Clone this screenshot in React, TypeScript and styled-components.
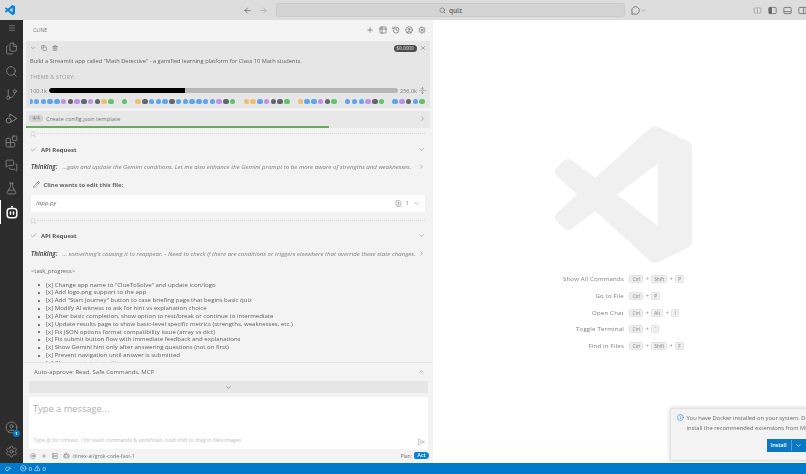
import React from 'react'
import styled, { createGlobalStyle } from 'styled-components'
import {
  ArrowLeft,
  ArrowRight,
  AtSign,
  Blocks,
  Bookmark,
  Bot,
  Check,
  ChevronDown,
  ChevronRight,
  ChevronUp,
  CircleUser,
  Copy,
  FileDiff,
  Files,
  FlaskConical,
  GitBranch,
  History,
  Info,
  Menu,
  MessageCircle,
  MessagesSquare,
  Pencil,
  Plus,
  Search,
  SendHorizontal,
  Server,
  Settings,
  SquareSplitHorizontal,
  Table2,
  Trash2,
  TriangleAlert,
  UnfoldVertical,
  X,
  XCircle,
} from 'lucide-react'

const GlobalStyle = createGlobalStyle`
  html, body {
    margin: 0;
    padding: 0;
    width: 806px;
    height: 474px;
    overflow: hidden;
    background: #fff;
  }
  * {
    box-sizing: border-box;
  }
`

const LOGO =
  'M23.15 2.587L18.21.21a1.494 1.494 0 0 0-1.705.29l-9.46 8.63-4.12-3.128a.999.999 0 0 0-1.276.057L.327 7.261A1 1 0 0 0 .326 8.74L3.899 12 .326 15.26a1 1 0 0 0 .001 1.479L1.65 17.94a.999.999 0 0 0 1.276.057l4.12-3.128 9.46 8.63a1.492 1.492 0 0 0 1.704.29l4.942-2.377A1.5 1.5 0 0 0 24 20.06V3.939a1.5 1.5 0 0 0-.85-1.352zm-5.146 14.861L10.826 12l7.178-5.448v10.896z'

const Page = styled.div`
  width: 806px;
  height: 474px;
  display: flex;
  flex-direction: column;
  overflow: hidden;
  font-family: 'Open Sans', 'Liberation Sans', sans-serif;
  filter: blur(0.3px);
`

const TitleBar = styled.div`
  height: 20px;
  flex: none;
  background: #dddddd;
  display: flex;
  align-items: center;
  color: #666;
`

const TitleLogo = styled.svg`
  width: 10px;
  height: 10px;
  margin-left: 5px;
  fill: #0a84d8;
`

const NavArrows = styled.div`
  margin-left: 228px;
  width: 33px;
  display: flex;
  gap: 7px;
`

const SearchBox = styled.div`
  width: 349px;
  height: 14px;
  background: #d4d4d4;
  border: 1px solid #cacaca;
  border-radius: 3px;
  display: flex;
  align-items: center;
  justify-content: center;
  gap: 3px;
  font-size: 6.5px;
  font-weight: 600;
  color: #666;
`

const CopilotGroup = styled.div`
  margin-left: 6px;
  display: flex;
  align-items: center;
  gap: 1px;
`

const LayoutGroup = styled.div`
  margin-left: auto;
  margin-right: -1px;
  display: flex;
  align-items: center;
  gap: 6px;
`

const Body = styled.div`
  flex: 1;
  min-height: 0;
  display: flex;
  position: relative;
`

const ActivityBar = styled.nav`
  width: 23px;
  flex: none;
  background: #2c2c2c;
  display: flex;
  flex-direction: column;
  align-items: center;
  color: #8b8b8b;
  padding-top: 2px;
`

const ActivityItem = styled.div<{ $active?: boolean }>`
  width: 100%;
  height: 23.4px;
  flex: none;
  display: flex;
  align-items: center;
  justify-content: center;
  position: relative;
  color: ${({ $active }) => ($active ? '#ffffff' : 'inherit')};
  border-left: 1px solid ${({ $active }) => ($active ? '#ffffff' : 'transparent')};
  padding-right: 1px;
`

const MenuItem = styled(ActivityItem)`
  height: 12px;
  margin-bottom: 2.5px;
`

const ActivitySpacer = styled.div`
  flex: 1;
`

const Badge = styled.span`
  position: absolute;
  right: 3px;
  bottom: 3px;
  width: 7px;
  height: 7px;
  border-radius: 50%;
  background: #007acc;
  color: #fff;
  font-size: 4px;
  font-weight: 700;
  line-height: 7px;
  text-align: center;
`

const SidePanel = styled.section`
  width: 410px;
  flex: none;
  background: #f3f3f3;
  display: flex;
  flex-direction: column;
  color: #616161;
`

const PanelHeader = styled.header`
  height: 20px;
  flex: none;
  display: flex;
  align-items: center;
  justify-content: space-between;
  padding: 0 7px 0 10px;
  font-size: 5px;
  letter-spacing: 0.1px;
  color: #777;
`

const HeaderIcons = styled.div`
  display: flex;
  align-items: center;
  gap: 5px;
  color: #6a6a6a;
`

const TaskCard = styled.div`
  height: 67.5px;
  flex: none;
  margin: 0.5px 3px 0;
  background: #e6e6e6;
  border-radius: 2px 2px 0 0;
  padding: 3px 4px 0 4px;
  display: flex;
  flex-direction: column;
`

const TaskTop = styled.div`
  height: 9px;
  display: flex;
  align-items: center;
  gap: 5px;
  color: #666;
`

const TaskCost = styled.span`
  margin-left: auto;
  margin-right: -1.5px;
  height: 7px;
  width: 23px;
  border-radius: 4px;
  background: #4c4c4c;
  color: #e4e4e4;
  font-size: 4.8px;
  line-height: 7px;
  text-align: center;
`

const TaskText = styled.div`
  margin-top: 4px;
  font-size: 5.7px;
  line-height: 8px;
  white-space: nowrap;
  color: #5f5f5f;
`

const TaskLabel = styled.div`
  margin-top: 8px;
  font-size: 5.7px;
  line-height: 8px;
  color: #a0a0a0;
`

const TokenRow = styled.div`
  margin-top: 6.5px;
  height: 7px;
  display: flex;
  align-items: center;
  font-size: 5.5px;
  color: #777;
  gap: 2px;
`

const TokenTrack = styled.div`
  flex: 1;
  height: 5px;
  border-radius: 3px;
  background: #b6b6b6;
  overflow: hidden;
`

const TokenFill = styled.div`
  height: 100%;
  background: #000;
  border-radius: 3px 0 0 3px;
`

const DotRow = styled.div`
  margin-top: 4.5px;
  height: 6px;
  display: flex;
  gap: 1.27px;
  overflow: hidden;
  & > :first-child {
    margin-left: -3px;
  }
`

const Dot = styled.span<{ $color: string }>`
  width: 5.5px;
  height: 5px;
  flex: none;
  border-radius: 2.5px 2.5px 2px 2px;
  background: ${({ $color }) => $color};
`

const StepBar = styled.div`
  height: 16.5px;
  flex: none;
  margin: 3px 3px 0;
  background: #e8e8e8;
  position: relative;
  display: flex;
  align-items: center;
  padding: 0 4px 1px 3px;
  gap: 3px;
  font-size: 5.8px;
  color: #777;
`

const StepBadge = styled.span`
  width: 14px;
  height: 7px;
  border-radius: 3px;
  background: #d2d2d2;
  font-size: 4.8px;
  line-height: 7px;
  text-align: center;
`

const StepProgress = styled.div`
  position: absolute;
  left: 0;
  bottom: 0;
  height: 1.5px;
  width: 303px;
  background: #68a85f;
`

const ChevronEnd = styled.span`
  margin-left: auto;
  display: flex;
  color: #888;
`

const Chat = styled.div`
  flex: 1;
  min-height: 0;
  overflow: hidden;
`

const MarkerRow = styled.div`
  height: 12px;
  margin: 0 8px 0 7px;
  display: flex;
  align-items: center;
  color: #c0c0c0;
  gap: 1px;
`

const MarkerLine = styled.div`
  flex: 1;
  border-top: 1px dotted #d8d8d8;
`

const ApiRow = styled.div<{ $tight?: boolean }>`
  height: 14px;
  margin-top: ${({ $tight }) => ($tight ? '2px' : '3px')};
  padding: 0 8px 0 7px;
  display: flex;
  align-items: center;
  gap: 4px;
  font-size: 5.95px;
  font-weight: 700;
  color: #555;
`

const GreenCheck = styled.span`
  display: flex;
  color: #5b9a5b;
`

const ThinkingRow = styled.div<{ $loose?: boolean }>`
  height: 14px;
  margin-top: ${({ $loose }) => ($loose ? '4px' : '3px')};
  padding: 0 8px 0 8px;
  display: flex;
  align-items: center;
  font-size: 6.1px;
  font-style: italic;
  color: #808080;
  white-space: nowrap;
`

const ThinkingLabel = styled.b`
  color: #555;
  margin-right: 5px;
`

const EditTitle = styled.div`
  height: 14px;
  margin-top: 4px;
  padding: 0 8px 0 10px;
  display: flex;
  align-items: center;
  gap: 3.5px;
  font-size: 5.85px;
  font-weight: 700;
  color: #666;
`

const FileBox = styled.div`
  height: 17px;
  margin: 3px 8px 3px 8px;
  background: #fff;
  border-radius: 2px;
  display: flex;
  align-items: center;
  padding: 0 5px 0 5px;
  font-size: 6px;
  font-style: italic;
  color: #666;
`

const FileMeta = styled.span`
  margin-left: auto;
  display: flex;
  align-items: center;
  gap: 4px;
  font-style: normal;
  color: #888;
`

const TagLine = styled.div`
  height: 14px;
  margin-top: 3px;
  padding-left: 8px;
  display: flex;
  align-items: center;
  font-size: 5.8px;
  color: #666;
`

const TaskList = styled.ul`
  margin: 4px 0 0;
  padding: 0 0 0 15px;
  list-style: none;
  font-size: 6.05px;
  line-height: 7.85px;
  color: #5f5f5f;
  white-space: nowrap;
`

const TaskItem = styled.li`
  display: flex;
  align-items: center;
  &::before {
    content: '';
    width: 2px;
    height: 2px;
    margin-right: 6px;
    flex: none;
    border-radius: 50%;
    background: #555;
  }
`

const AutoApprove = styled.div`
  height: 19.5px;
  flex: none;
  border-top: 1px solid #e3e3e3;
  display: flex;
  align-items: center;
  padding: 0 8px 0 11px;
  font-size: 6px;
  color: #666;
`

const ExpandBar = styled.div`
  height: 12px;
  flex: none;
  margin: 0 5px 0 6px;
  background: #e6e6e6;
  display: flex;
  align-items: center;
  justify-content: center;
  color: #666;
`

const Composer = styled.div`
  height: 52.5px;
  flex: none;
  margin: 3.5px 5px 0 6px;
  background: #fff;
  position: relative;
  padding: 5px 0 0 4px;
`

const Placeholder = styled.div`
  font-size: 9.3px;
  line-height: 14px;
  color: #b0b0b0;
`

const Hint = styled.div`
  position: absolute;
  left: 4.5px;
  bottom: 5px;
  font-size: 5.1px;
  line-height: 7px;
  color: #bdbdbd;
`

const SendButton = styled.span`
  position: absolute;
  right: 3px;
  bottom: 3px;
  display: flex;
  color: #b5b5b5;
`

const ComposerFooter = styled.div`
  height: 14px;
  flex: none;
  display: flex;
  align-items: center;
  padding: 0 4px 1px 7px;
  gap: 5px;
  font-size: 5.3px;
  color: #777;
`

const ModelName = styled.span`
  margin-left: -2.5px;
`

const ModeSwitch = styled.div`
  margin-left: auto;
  display: flex;
  align-items: center;
  gap: 2px;
  font-size: 5px;
`

const ActPill = styled.span`
  width: 15px;
  height: 7.5px;
  border-radius: 2px 4px 4px 2px;
  background: #0a7fd6;
  color: #fff;
  font-size: 5px;
  font-weight: 600;
  line-height: 7.5px;
  text-align: center;
`

const Editor = styled.main`
  flex: 1;
  background: #fff;
  display: flex;
  flex-direction: column;
  align-items: center;
  padding: 106px 0 0 8px;
`

const Watermark = styled.svg`
  width: 137px;
  height: 137px;
  fill: #f0f0f0;
  flex: none;
`

const Shortcuts = styled.div`
  margin-top: 8px;
  display: grid;
  grid-template-columns: auto auto;
  grid-auto-rows: 16.7px;
  column-gap: 5.5px;
  align-items: center;
`

const ShortcutLabel = styled.span`
  justify-self: end;
  font-size: 6.05px;
  letter-spacing: 0.2px;
  color: #7d7d7d;
`

const KeyGroup = styled.span`
  display: flex;
  align-items: center;
  gap: 2.5px;
  font-size: 5px;
  color: #888;
`

const Key = styled.kbd`
  min-width: 8px;
  height: 8px;
  padding: 0 2px;
  background: #f0f0f0;
  border: 1px solid #e2e2e2;
  border-radius: 1.5px;
  font-family: inherit;
  font-size: 4.8px;
  line-height: 6px;
  text-align: center;
  color: #777;
`

const Toast = styled.aside`
  position: absolute;
  left: 670px;
  top: 387.5px;
  width: 180px;
  height: 53px;
  background: #f3f3f3;
  border: 1px solid #e2e2e2;
  box-shadow: 0 0 4px rgba(0, 0, 0, 0.2);
  padding: 4px 0 0 6px;
  font-size: 5.75px;
  line-height: 10.5px;
  color: #666;
  white-space: nowrap;
`

const ToastLine = styled.div<{ $indent?: boolean }>`
  display: flex;
  align-items: center;
  gap: 2.5px;
  padding-left: ${({ $indent }) => ($indent ? '9.5px' : '0')};
  color: #6a6a6a;
`

const ToastIcon = styled.span`
  display: flex;
  color: #1a7fd0;
`

const InstallButton = styled.div`
  position: absolute;
  left: 95.5px;
  top: 30.5px;
  height: 13px;
  width: 40px;
  background: #0a78c2;
  color: #fff;
  font-size: 5.4px;
  font-weight: 600;
  display: flex;
  align-items: center;
`

const InstallLabel = styled.span`
  width: 25px;
  text-align: center;
  border-right: 1px solid #4d9fd6;
`

const InstallCaret = styled.span`
  width: 13px;
  display: flex;
  justify-content: center;
`

const StatusBar = styled.footer`
  height: 11px;
  flex: none;
  background: #007acc;
  color: #e6f2fa;
  display: flex;
  align-items: center;
  padding-left: 5px;
  gap: 9px;
  font-size: 6px;
`

const StatusCounts = styled.span`
  display: flex;
  align-items: center;
  gap: 2px;
`

const RobotIcon = () => (
  <svg width="14" height="14" viewBox="0 0 16 16" fill="none" stroke="currentColor" strokeWidth="1.7">
    <circle cx="8" cy="2" r="1.2" fill="currentColor" stroke="none" />
    <rect x="2.5" y="4" width="11" height="10.5" rx="3.2" />
    <rect x="5.4" y="7" width="1.7" height="4.4" rx="0.8" fill="currentColor" stroke="none" />
    <rect x="8.9" y="7" width="1.7" height="4.4" rx="0.8" fill="currentColor" stroke="none" />
  </svg>
)

const RunDebugIcon = () => (
  <svg width="13" height="13" viewBox="0 0 16 16" fill="none" stroke="currentColor" strokeWidth="1.2">
    <path d="M6 2.5 L14.5 8 L7.5 12.5" strokeLinejoin="round" />
    <path d="M6 2.5 V6" />
    <circle cx="4.5" cy="10.5" r="3" />
    <path d="M1 10.5 H1.5 M7.5 10.5 H8" />
  </svg>
)

const RemoteIcon = () => (
  <svg width="6" height="6" viewBox="0 0 12 12" fill="none" stroke="currentColor" strokeWidth="1.6">
    <path d="M1 6.5 L4.5 10 M4.5 10 L11 3.5" />
    <path d="M7 1.5 L10.5 5" />
    <path d="M1.5 5 L5 1.5" />
  </svg>
)

const LayoutIcon = ({ side }: { side: 'left' | 'bottom' | 'right' }) => (
  <svg width="9" height="9" viewBox="0 0 16 16" fill="none" stroke="currentColor" strokeWidth="1.4">
    <rect x="1.5" y="2.5" width="13" height="11" rx="1.5" />
    {side === 'left' && <rect x="1.5" y="2.5" width="5.5" height="11" fill="currentColor" stroke="none" />}
    {side === 'bottom' && <path d="M1.5 10 H14.5" />}
    {side === 'right' && <path d="M10 2.5 V13.5" />}
  </svg>
)

const b = '#5ea5ee'
const p = '#bd93e8'
const g = '#63666c'
const o = '#ecc06f'
const n = '#5fc46d'
const DOTS = [
  b, b, b, b, b, p, g, p, g, p, g, o, n, '', n, '', o, g, b, b, b, g, b, b, b, b, b, b, p, g, n, '',
  o, o, b, p, g, g, n, '', o, b, b, p, g, n, '', b, b, b, p, g, n, '', b, p, g, b, n,
]

const PROGRESS = [
  '[x] Change app name to "ClueToSolve" and update icon/logo',
  '[x] Add logo.png support to the app',
  '[x] Add "Start Journey" button to case briefing page that begins basic quiz',
  '[x] Modify AI witness to ask for hint vs explanation choice',
  '[x] After basic completion, show option to rest/break or continue to intermediate',
  '[x] Update results page to show basic-level specific metrics (strengths, weaknesses, etc.)',
  '[x] Fix JSON options format compatibility issue (array vs dict)',
  '[x] Fix submit button flow with immediate feedback and explanations',
  '[x] Show Gemini hint only after answering questions (not on first)',
  '[x] Prevent navigation until answer is submitted',
  '[x] Clean up state transitions',
]

const SHORTCUTS = [
  { label: 'Show All Commands', keys: ['Ctrl', 'Shift', 'P'] },
  { label: 'Go to File', keys: ['Ctrl', 'P'] },
  { label: 'Open Chat', keys: ['Ctrl', 'Alt', 'I'] },
  { label: 'Toggle Terminal', keys: ['Ctrl', '`'] },
  { label: 'Find in Files', keys: ['Ctrl', 'Shift', 'F'] },
]

const App = () => {
  return (
    <Page>
      <GlobalStyle />
      <TitleBar>
        <TitleLogo viewBox="0 0 24 24">
          <path d={LOGO} />
        </TitleLogo>
        <NavArrows>
          <ArrowLeft size={9} />
          <ArrowRight size={9} color="#aaa" />
        </NavArrows>
        <SearchBox>
          <Search size={7} />
          quiz
        </SearchBox>
        <CopilotGroup>
          <MessageCircle size={9} strokeDasharray="3 1.5" />
          <ChevronDown size={5} />
        </CopilotGroup>
        <LayoutGroup>
          <SquareSplitHorizontal size={9} color="#999" />
          <LayoutIcon side="left" />
          <LayoutIcon side="bottom" />
          <LayoutIcon side="right" />
        </LayoutGroup>
      </TitleBar>

      <Body>
        <ActivityBar>
          <MenuItem>
            <Menu size={8} />
          </MenuItem>
          <ActivityItem>
            <Files size={13} strokeWidth={1.5} />
          </ActivityItem>
          <ActivityItem>
            <Search size={13} strokeWidth={1.5} />
          </ActivityItem>
          <ActivityItem>
            <GitBranch size={13} strokeWidth={1.5} />
          </ActivityItem>
          <ActivityItem>
            <RunDebugIcon />
          </ActivityItem>
          <ActivityItem>
            <Blocks size={13} strokeWidth={1.5} />
          </ActivityItem>
          <ActivityItem>
            <MessagesSquare size={13} strokeWidth={1.5} />
          </ActivityItem>
          <ActivityItem>
            <FlaskConical size={13} strokeWidth={1.5} />
          </ActivityItem>
          <ActivityItem $active>
            <RobotIcon />
          </ActivityItem>
          <ActivitySpacer />
          <ActivityItem>
            <CircleUser size={13} strokeWidth={1.5} />
            <Badge>1</Badge>
          </ActivityItem>
          <ActivityItem>
            <Settings size={13} strokeWidth={1.5} />
          </ActivityItem>
        </ActivityBar>

        <SidePanel>
          <PanelHeader>
            CLINE
            <HeaderIcons>
              <Plus size={8} />
              <Table2 size={8} />
              <History size={8} />
              <CircleUser size={8} />
              <Settings size={8} />
            </HeaderIcons>
          </PanelHeader>

          <TaskCard>
            <TaskTop>
              <ChevronDown size={6} />
              <Copy size={6} />
              <Trash2 size={6} />
              <TaskCost>$0.0000</TaskCost>
              <X size={6} />
            </TaskTop>
            <TaskText>
              Build a Streamlit app called "Math Detective" - a gamified learning platform for Class 10 Math students.
            </TaskText>
            <TaskLabel>THEME &amp; STORY:</TaskLabel>
            <TokenRow>
              <span>100.1k</span>
              <TokenTrack>
                <TokenFill style={{ width: `${(100.1 / 256) * 100}%` }} />
              </TokenTrack>
              <span>256.0k</span>
              <UnfoldVertical size={7} />
            </TokenRow>
            <DotRow>
              {DOTS.map((color, i) => (
                <Dot key={i} $color={color || 'transparent'} />
              ))}
            </DotRow>
          </TaskCard>

          <StepBar>
            <StepBadge>4/4</StepBadge>
            Create config.json template
            <ChevronEnd>
              <ChevronRight size={7} />
            </ChevronEnd>
            <StepProgress />
          </StepBar>

          <Chat>
            <MarkerRow>
              <Bookmark size={6} />
              <MarkerLine />
            </MarkerRow>
            <ApiRow>
              <GreenCheck>
                <Check size={7} />
              </GreenCheck>
              API Request
              <ChevronEnd>
                <ChevronDown size={7} />
              </ChevronEnd>
            </ApiRow>
            <ThinkingRow>
              <ThinkingLabel>Thinking:</ThinkingLabel>
              ...gain and update the Gemini conditions. Let me also enhance the Gemini prompt to be more aware of
              strengths and weaknesses.
              <ChevronEnd>
                <ChevronRight size={7} />
              </ChevronEnd>
            </ThinkingRow>
            <EditTitle>
              <Pencil size={7} />
              Cline wants to edit this file:
            </EditTitle>
            <FileBox>
              /app.py
              <FileMeta>
                <FileDiff size={7} />1
                <ChevronDown size={7} />
              </FileMeta>
            </FileBox>
            <MarkerRow>
              <Bookmark size={6} />
              <MarkerLine />
            </MarkerRow>
            <ApiRow $tight>
              <GreenCheck>
                <Check size={7} />
              </GreenCheck>
              API Request
              <ChevronEnd>
                <ChevronDown size={7} />
              </ChevronEnd>
            </ApiRow>
            <ThinkingRow $loose>
              <ThinkingLabel>Thinking:</ThinkingLabel>
              ... something's causing it to reappear. - Need to check if there are conditions or triggers elsewhere
              that override these state changes.
              <ChevronEnd>
                <ChevronRight size={7} />
              </ChevronEnd>
            </ThinkingRow>
            <TagLine>&lt;task_progress&gt;</TagLine>
            <TaskList>
              {PROGRESS.map((item) => (
                <TaskItem key={item}>{item}</TaskItem>
              ))}
            </TaskList>
          </Chat>

          <AutoApprove>
            Auto-approve: Read, Safe Commands, MCP
            <ChevronEnd>
              <ChevronUp size={7} />
            </ChevronEnd>
          </AutoApprove>
          <ExpandBar>
            <ChevronDown size={7} />
          </ExpandBar>
          <Composer>
            <Placeholder>Type a message...</Placeholder>
            <Hint>Type @ for context, / for slash commands &amp; workflows, hold shift to drag in files/images</Hint>
            <SendButton>
              <SendHorizontal size={8} />
            </SendButton>
          </Composer>
          <ComposerFooter>
            <AtSign size={6} />
            <Plus size={6} />
            <Server size={6} />
            <Bot size={7} />
            <ModelName>clinex-ai/grok-code-fast-1</ModelName>
            <ModeSwitch>
              Plan:
              <ActPill>Act</ActPill>
            </ModeSwitch>
          </ComposerFooter>
        </SidePanel>

        <Editor>
          <Watermark viewBox="0 0 24 24">
            <path d={LOGO} />
          </Watermark>
          <Shortcuts>
            {SHORTCUTS.map((item) => (
              <React.Fragment key={item.label}>
                <ShortcutLabel>{item.label}</ShortcutLabel>
                <KeyGroup>
                  {item.keys.map((key, i) => (
                    <React.Fragment key={key}>
                      {i > 0 && '+'}
                      <Key>{key}</Key>
                    </React.Fragment>
                  ))}
                </KeyGroup>
              </React.Fragment>
            ))}
          </Shortcuts>
        </Editor>

        <Toast>
          <ToastLine>
            <ToastIcon>
              <Info size={7} />
            </ToastIcon>
            You have Docker installed on your system. Do you want to
          </ToastLine>
          <ToastLine $indent>install the recommended extensions from Microsoft</ToastLine>
          <InstallButton>
            <InstallLabel>Install</InstallLabel>
            <InstallCaret>
              <ChevronDown size={7} />
            </InstallCaret>
          </InstallButton>
        </Toast>
      </Body>

      <StatusBar>
        <RemoteIcon />
        <StatusCounts>
          <XCircle size={6.5} />0
          <TriangleAlert size={6.5} />0
        </StatusCounts>
      </StatusBar>
    </Page>
  )
}

export default App
